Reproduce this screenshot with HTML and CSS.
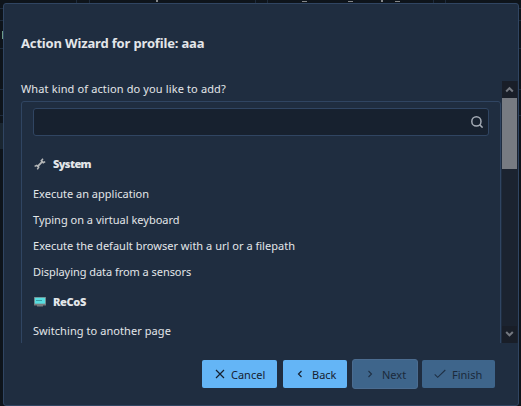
FILE: index.html
```html
<!DOCTYPE html>
<html lang="en">
<head>
<meta charset="utf-8">
<title>Action Wizard</title>
<link rel="stylesheet" href="styles.css">
</head>
<body>
<div class="backdrop">
  <i class="col c1"></i><i class="col c2"></i><i class="col c3"></i><i class="col c4"></i><i class="col c5"></i><i class="col c6"></i>
  <i class="mark m1"></i><i class="mark m2"></i><i class="mark m3"></i><i class="mark m4"></i><i class="mark m5"></i><i class="mark m6"></i>
  <i class="row r1"></i><i class="row r2"></i><i class="row r3"></i><i class="row r4"></i><i class="row r5"></i><i class="band"></i>
</div>
<main class="dialog">
  <header class="header"><h1 class="title">Action Wizard for profile: aaa</h1></header>
  <section class="content">
    <div class="view">
      <p class="question"><span class="t-question">What kind of action do you like to add?</span></p>
      <div class="list">
        <div class="search">
          <svg width="12" height="12" viewBox="0 0 12 12" fill="none" stroke="#a4abb5" stroke-width="1.5"><circle cx="5.4" cy="5.4" r="4.6"/><path d="m8.6 8.6 3 3"/></svg>
        </div>
        <h2 class="group"><svg width="12" height="12" viewBox="0 0 12 12"><path d="M3.2 8.8 8.8 3.2" stroke="#b5b7b8" stroke-width="1.9"/><path d="M9 .8 7.3 2.8 9.2 4.7 11.2 3.6M.6 8.4 2.8 7.3 4.7 9.2 3.3 11.3" fill="none" stroke="#b5b7b8" stroke-width="1.5"/></svg><span class="t-system">System</span></h2>
        <ul class="items">
          <li>Execute an application</li>
          <li>Typing on a virtual keyboard</li>
          <li class="t-browser">Execute the default browser with a url or a filepath</li>
          <li>Displaying data from a sensors</li>
        </ul>
        <h2 class="group second"><svg width="12" height="12" viewBox="0 0 12 12"><path fill="#777b7d" d="M0 1h12v8.5H9v1H3v-1H0z"/><path fill="#57dde0" d="M.8 1.7h10.4v6H.8z"/><path d="M2 4.5h6" stroke="#379ca2"/></svg><span class="t-recos">ReCoS</span></h2>
        <ul class="items last"><li class="t-switch">Switching to another page</li></ul>
      </div>
    </div>
    <div class="scrollbar">
      <svg width="15" height="17" viewBox="0 0 15 17"><path d="M4.2 10.5 7.5 7.2l3.3 3.3" fill="none" stroke="#747880" stroke-width="2"/></svg>
      <div class="thumb"></div>
      <svg class="down" width="15" height="17" viewBox="0 0 15 17"><path d="M4.2 6 7.5 9.3 10.8 6" fill="none" stroke="#747880" stroke-width="2"/></svg>
    </div>
  </section>
  <footer class="footer">
    <button class="btn cancel"><svg width="10" height="10" viewBox="0 0 10 10"><path d="m1 1 8 8M9 1 1 9"/></svg><span>Cancel</span></button>
    <button class="btn back"><svg width="10" height="10" viewBox="0 0 10 10"><path d="M6.5 2 3.5 5l3 3"/></svg><span>Back</span></button>
    <button class="btn next" disabled><svg width="10" height="10" viewBox="0 0 10 10"><path d="m3.5 2 3 3-3 3"/></svg><span>Next</span></button>
    <button class="btn finish" disabled><svg width="12" height="10" viewBox="0 0 12 10"><path d="m.7 5.3 3 3L11.3 1"/></svg><span>Finish</span></button>
  </footer>
</main>
</body>
</html>
```
FILE: styles.css
```css
* { box-sizing: border-box; }
body { margin: 0; width: 521px; height: 406px; overflow: hidden; position: relative; background: #0e141b; color: #e3e6e9; font: 11px/16px "Noto Sans", sans-serif; padding: 3px 2px 0 3px; }
.backdrop { position: absolute; inset: 0; }
.backdrop i { position: absolute; }
.col { top: 0; width: 1px; height: 4px; background: #1d2a3b; }
.c1 { left: 76px; } .c2 { left: 89px; } .c3 { left: 255px; } .c4 { left: 267px; } .c5 { left: 433px; } .c6 { left: 445px; }
.mark { top: 1px; width: 5px; height: 1px; background: #858789; }
.m1 { left: 156px; top: 0; width: 2px; height: 2px; } .m2 { left: 302px; } .m3 { left: 348px; } .m4 { left: 381px; top: 0; width: 2px; height: 2px; } .m5 { left: 395px; }
.m6 { left: 2px; top: 31px; width: 1px; height: 8px; background: #6d9b87; }
.row { left: 0; width: 521px; height: 1px; background: #1d2a3b; }
.r1 { top: 8px; } .r2 { top: 20px; } .r3 { top: 48px; } .r4 { top: 89px; } .r5 { top: 115px; }
.band { left: 0; top: 123px; width: 3px; height: 26px; background: #1a2631; }
.dialog { position: relative; width: 516px; height: 403px; border: 1px solid #304562; border-radius: 3px; background: #1f2d40; display: flex; flex-direction: column; }
.header { height: 77px; padding: 29px 17px 0; }
.title { margin: 0; font-size: 13px; line-height: 20px; font-weight: 700; white-space: nowrap; letter-spacing: -.16px; }
.content { height: 262px; display: flex; overflow: hidden; }
.view { width: 498px; padding-left: 17px; }
.question { margin: 0; height: 20px; }
.t-question { letter-spacing: .13px; }
.list { width: 480px; height: 260px; border: 1px solid #304562; border-radius: 3px; padding: 6px 11px; }
.search { height: 28px; border: 1px solid #304562; border-radius: 3px; background: #17212f; display: flex; align-items: center; justify-content: flex-end; padding-right: 5px; }
.group { margin: 18px 0 0; height: 20px; display: flex; align-items: center; gap: 7px; padding-left: 1px; font-size: 11px; font-weight: 900; }
.group.second { margin-top: 7px; }
.t-system { letter-spacing: -.6px; }
.t-recos { letter-spacing: -.35px; }
.items { margin: 7px 0 0; padding: 0; list-style: none; }
.items.last { margin-top: 6px; }
.items li { height: 26px; line-height: 26px; white-space: nowrap; }
.items .t-browser { letter-spacing: .02px; }
.items .t-switch { letter-spacing: .07px; }
.items li:nth-child(4) { letter-spacing: -.05px; }
.scrollbar { width: 16px; height: 262px; background: #1b2330; display: flex; flex-direction: column; }
.scrollbar svg { display: block; background: #191e28; }
.thumb { height: 71px; width: 15px; background: #777b82; }
.down { margin-top: auto; }
.footer { padding: 16px 22px 0 198px; display: flex; align-items: center; }
.btn { height: 28px; border: 0; border-radius: 2px; background: #64b5f6; color: #17212f; padding: 0; display: flex; align-items: center; font: 11px/16px "Noto Sans", sans-serif; }
.btn span { padding-top: 2px; }
.btn svg { fill: none; stroke: #17212f; stroke-width: 1.2; }
.btn:disabled { background: #3e658b; color: #1b2a3b; }
.btn:disabled svg { stroke: #1f3045; stroke-width: 1.1; }
.cancel { width: 75px; padding-left: 13px; gap: 6px; margin-right: 6px; }
.back { width: 64px; padding-left: 12px; gap: 7px; margin-right: 5px; }
.next { width: 66px; height: 30px; border: 1px solid #4b6c90; padding-left: 12px; gap: 7px; margin-right: 4px; border-radius: 3px; }
.finish { width: 73px; padding-left: 12px; gap: 6px; }
```
